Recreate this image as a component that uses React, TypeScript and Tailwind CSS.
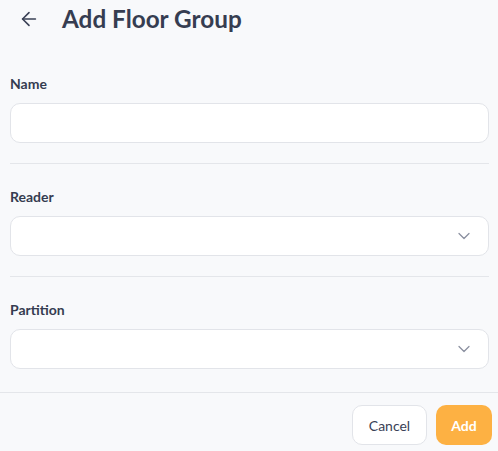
import React, { useState } from 'react';
import { ArrowLeft, ChevronDown } from 'lucide-react';

interface SelectFieldProps {
  label: string;
  value: string;
  onChange: (v: string) => void;
  options: string[];
}

function SelectField({ label, value, onChange, options }: SelectFieldProps) {
  return (
    <div className="flex flex-col">
      <label className="text-[14px] leading-5 font-bold text-[#353c50]">{label}</label>
      <div className="relative mt-[9px]">
        <select
          value={value}
          onChange={e => onChange(e.target.value)}
          className="w-full h-10 appearance-none bg-white border border-[#e2e4e9] rounded-[10px] pl-3 pr-10 text-[14px] text-[#353c50] focus:outline-none"
        >
          <option value=""></option>
          {options.map(o => (
            <option key={o} value={o}>{o}</option>
          ))}
        </select>
        <ChevronDown
          size={20}
          strokeWidth={1.5}
          className="absolute right-[15px] top-1/2 -translate-y-1/2 text-[#8b90a0] pointer-events-none"
        />
      </div>
    </div>
  );
}

export default function App() {
  const [name, setName] = useState('');
  const [reader, setReader] = useState('');
  const [partition, setPartition] = useState('');

  return (
    <div className="w-[498px] h-[451px] overflow-hidden bg-[#f8f9fb] flex flex-col font-['Lato','Noto_Sans',sans-serif]">
      <div className="h-[38px] flex items-center">
        <button className="ml-[9px] w-10 h-[38px] flex items-center justify-center text-[#3a4156]">
          <ArrowLeft size={22} strokeWidth={1.75} />
        </button>
        <h1 className="ml-[13px] text-[24.3px] leading-8 font-bold text-[#363d51]">Add Floor Group</h1>
      </div>

      <div className="pt-[36px] pl-[10px] pr-[9px] flex flex-col">
        <div className="flex flex-col">
          <label className="text-[14px] leading-5 font-bold text-[#353c50]">Name</label>
          <input
            value={name}
            onChange={e => setName(e.target.value)}
            className="mt-[9px] h-10 bg-white border border-[#e2e4e9] rounded-[10px] px-3 text-[14px] text-[#353c50] focus:outline-none"
          />
        </div>

        <div className="mt-5 mb-[23px] h-px bg-[#e4e6ea]" />

        <SelectField label="Reader" value={reader} onChange={setReader} options={['Reader 1', 'Reader 2']} />

        <div className="mt-5 mb-[23px] h-px bg-[#e4e6ea]" />

        <SelectField label="Partition" value={partition} onChange={setPartition} options={['Partition 1', 'Partition 2']} />
      </div>

      <div className="mt-[23px] border-t border-[#e4e6ea] pt-3 pr-[6px] flex justify-end gap-[9px]">
        <button className="h-10 w-[75px] bg-white border border-[#e2e4e9] rounded-[10px] text-[14px] text-[#3a4156]">
          Cancel
        </button>
        <button className="h-10 w-[56px] bg-[#fdb143] rounded-[10px] text-[14px] font-bold text-white">
          Add
        </button>
      </div>
    </div>
  );
}
